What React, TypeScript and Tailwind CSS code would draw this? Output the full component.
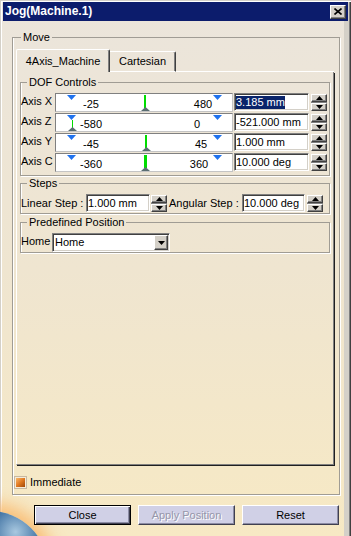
import React from 'react';

const FONT = "font-['Liberation_Sans',Arial,sans-serif]";

type AxisRow = {
  name: string;
  min: string;
  max: string;
  maxCenter: number;
  pos: number;
  posW: number;
  low?: boolean;
  value: string;
  selected?: boolean;
};

const AXES: AxisRow[] = [
  { name: 'Axis X', min: '-25', max: '480', maxCenter: 148, pos: 89, posW: 2, value: '3.185 mm', selected: true },
  { name: 'Axis Z', min: '-580', max: '0', maxCenter: 142, pos: 17, posW: 1, low: true, value: '-521.000 mm' },
  { name: 'Axis Y', min: '-45', max: '45', maxCenter: 146, pos: 90, posW: 2, value: '1.000 mm' },
  { name: 'Axis C', min: '-360', max: '360', maxCenter: 144, pos: 89, posW: 3, value: '10.000 deg' },
];

const sunken =
  'border border-t-[#808080] border-l-[#808080] border-b-white border-r-white shadow-[inset_1px_1px_0_#404040,inset_-1px_-1px_0_#d4d0c8]';
const raised =
  'border border-t-white border-l-white border-b-[#404040] border-r-[#404040] shadow-[inset_-1px_-1px_0_#808080]';
const group = 'border border-[#a09c94] shadow-[inset_1px_0_0_#fff,1px_1px_0_#fff]';

function Arrow({ dir, w, h, color = '#000' }: { dir: 'up' | 'down'; w: number; h: number; color?: string }) {
  const d = dir === 'up' ? `M0 ${h}L${w / 2} 0L${w} ${h}Z` : `M0 0L${w} 0L${w / 2} ${h}Z`;
  return (
    <svg width={w} height={h} viewBox={`0 0 ${w} ${h}`} className="block">
      <path d={d} fill={color} />
    </svg>
  );
}

function Spin() {
  return (
    <div className="flex flex-col w-[16px] h-[17px] bg-[#808080] gap-px shrink-0">
      <div className={`flex-1 flex items-center justify-center bg-[#d4d0c8] ${raised}`}>
        <Arrow dir="up" w={7} h={4} />
      </div>
      <div className={`flex-1 flex items-center justify-center bg-[#d4d0c8] ${raised}`}>
        <Arrow dir="down" w={7} h={4} />
      </div>
    </div>
  );
}

function Slider({ a }: { a: AxisRow }) {
  return (
    <div className="relative w-[178px] h-[19px] shrink-0 bg-white border border-t-[#808080] border-l-[#808080] border-b-[#c4c4c4] border-r-[#c4c4c4]">
      <span className="absolute left-[11px] top-[1px]">
        <Arrow dir="down" w={9} h={5} color="#1f72ee" />
      </span>
      <span className="absolute left-[157px] top-[1px]">
        <Arrow dir="down" w={9} h={5} color="#1f72ee" />
      </span>
      <span className="absolute left-[15px] top-[4px] w-[40px] text-center">{a.min}</span>
      <span className="absolute top-[4px] w-[40px] text-center" style={{ left: a.maxCenter - 21 }}>
        {a.max}
      </span>
      <span
        className="absolute bottom-[3px] bg-[#00dd00]"
        style={{ left: a.pos - 1, width: a.posW, top: a.low ? 6 : 1 }}
      />
      <span className="absolute bottom-0" style={{ left: a.pos - 1 + a.posW / 2 - 4.5 }}>
        <Arrow dir="up" w={9} h={4} color="#5b6e72" />
      </span>
    </div>
  );
}

function TextBox({ text, width, selected }: { text: string; width: string; selected?: boolean }) {
  return (
    <div className={`${width} h-[18px] shrink-0 bg-white flex items-center pl-[1px] whitespace-nowrap ${sunken}`}>
      <span className={selected ? 'bg-[#0a246a] text-white' : ''}>{text}</span>
    </div>
  );
}

function Globe() {
  return (
    <div className="absolute left-[-68px] top-[511px] w-[116px] h-[116px] rounded-full bg-[radial-gradient(circle_at_72%_18%,#a8c8e0_0%,#4a7aa8_18%,#1c3c6a_45%,#0c1c3c_75%)] shadow-[0_0_16px_8px_rgba(250,180,100,0.8)]" />
  );
}

export default function App() {
  return (
    <div
      className={`relative w-[351px] h-[536px] overflow-hidden bg-linear-to-b from-[#ebe5dc] via-[#efe5d0] to-[#f7e9c4] pt-[2px] pl-[3px] pr-[3px] text-[11px] leading-[13px] text-black ${FONT} shadow-[inset_1px_1px_0_#d4d0c8,inset_2px_2px_0_#fff,inset_-1px_0_0_#404040,inset_-2px_0_0_#808080,inset_-7px_0_0_#d4d0c8]`}
    >
      <Globe />
      <div className="relative flex flex-col">
        {/* title bar */}
        <div className="h-[19px] bg-[#0c1c6c] flex items-center justify-between pl-[2px] pr-[2px]">
          <span className="text-white font-bold text-[12px]">Jog(Machine.1)</span>
          <div className={`w-[16px] h-[14px] bg-[#d4d0c8] flex items-center justify-center ${raised}`}>
            <svg width="8" height="7" viewBox="0 0 8 7" className="block">
              <path d="M0.5 0.5L7.5 6.5M7.5 0.5L0.5 6.5" stroke="#000" strokeWidth="1.6" />
            </svg>
          </div>
        </div>

        <fieldset className={`mt-[10px] ml-[9px] w-[328px] pt-[5px] pl-[2px] pb-[6px] ${group}`}>
          <legend className="ml-[6px] px-[2px]">Move</legend>

          {/* tabs */}
          <div className="flex items-end h-[23px] w-[318px] ml-[1px]">
            <div className="h-[23px] w-[94px] flex items-center justify-center border-t border-l border-white border-r border-r-[#404040] shadow-[inset_-1px_0_0_#808080] rounded-t-[2px]">
              4Axis_Machine
            </div>
            <div className="h-[21px] w-[66px] flex items-center justify-center border-t border-t-white border-b border-b-white border-r border-r-[#404040] shadow-[inset_-1px_0_0_#808080] rounded-tr-[2px]">
              Cartesian
            </div>
            <div className="flex-1 border-b border-white" />
          </div>

          {/* tab page */}
          <div className="ml-[1px] w-[318px] h-[393px] border-l border-l-white border-r border-r-[#808080] border-b border-b-[#808080] shadow-[1px_1px_0_#202020] flex flex-col">
            <fieldset className={`mt-[4px] ml-[3px] w-[310px] pt-[4px] pb-[3px] ${group}`}>
              <legend className="ml-[6px] px-[2px]">DOF Controls</legend>
              <div className="flex flex-col gap-px">
                {AXES.map((a) => (
                  <div key={a.name} className="flex items-center h-[19px]">
                    <span className="w-[34px] shrink-0 -mt-[3px]">{a.name}</span>
                    <Slider a={a} />
                    <div className="ml-[1px] self-start">
                      <TextBox text={a.value} width="w-[75px]" selected={a.selected} />
                    </div>
                    <div className="ml-[2px]">
                      <Spin />
                    </div>
                  </div>
                ))}
              </div>
            </fieldset>

            <fieldset className={`mt-[1px] ml-[3px] w-[310px] pt-[4px] pb-[1px] ${group}`}>
              <legend className="ml-[6px] px-[2px]">Steps</legend>
              <div className="flex items-center h-[18px]">
                <span className="w-[65px] shrink-0 whitespace-nowrap">Linear Step :</span>
                <TextBox text="1.000 mm" width="w-[64px]" />
                <div className="ml-[1px]">
                  <Spin />
                </div>
                <span className="ml-[2px] w-[73px] shrink-0 whitespace-nowrap">Angular Step :</span>
                <TextBox text="10.000 deg" width="w-[63px]" />
                <div className="ml-[2px]">
                  <Spin />
                </div>
              </div>
            </fieldset>

            <fieldset className={`mt-[2px] ml-[3px] w-[310px] pt-[4px] ${group}`}>
              <legend className="ml-[6px] px-[2px]">Predefined Position</legend>
              <div className="flex items-center h-[19px]">
                <span className="w-[31px] shrink-0 -mt-[2px]">Home</span>
                <div className={`w-[118px] h-[19px] bg-white flex items-center ${sunken}`}>
                  <span className="flex-1 pl-[2px]">Home</span>
                  <div className={`w-[14px] h-[15px] mr-[1px] flex items-center justify-center bg-[#d4d0c8] ${raised}`}>
                    <Arrow dir="down" w={7} h={4} />
                  </div>
                </div>
              </div>
            </fieldset>
          </div>

          {/* immediate toggle */}
          <div className="mt-[12px] flex items-center gap-[4px] h-[11px]">
            <span className="w-[11px] h-[11px] border border-[#f4ead8] shadow-[0_0_0_1px_#c8b8a0] bg-linear-to-br from-[#f8b868] via-[#e07820] to-[#a04808]" />
            <span>Immediate</span>
          </div>
        </fieldset>

        {/* dialog buttons */}
        <div className="mt-[10px] ml-[31px] flex gap-[7px]">
          <button className="w-[97px] h-[20px] bg-[#d0d0e6] flex items-center justify-center border border-black shadow-[inset_1px_1px_0_#fff,inset_-1px_-1px_0_#404050,inset_-2px_-2px_0_#8c8ca4]">
            Close
          </button>
          <button
            disabled
            className="w-[97px] h-[20px] bg-[#d0d0e6] flex items-center justify-center text-[#9696aa] [text-shadow:1px_1px_0_#fff] border border-t-white border-l-white border-b-[#404050] border-r-[#404050] shadow-[inset_-1px_-1px_0_#8c8ca4]"
          >
            Apply Position
          </button>
          <button className="w-[97px] h-[20px] bg-[#d0d0e6] flex items-center justify-center border border-t-white border-l-white border-b-[#404050] border-r-[#404050] shadow-[inset_-1px_-1px_0_#8c8ca4]">
            Reset
          </button>
        </div>
      </div>
    </div>
  );
}
